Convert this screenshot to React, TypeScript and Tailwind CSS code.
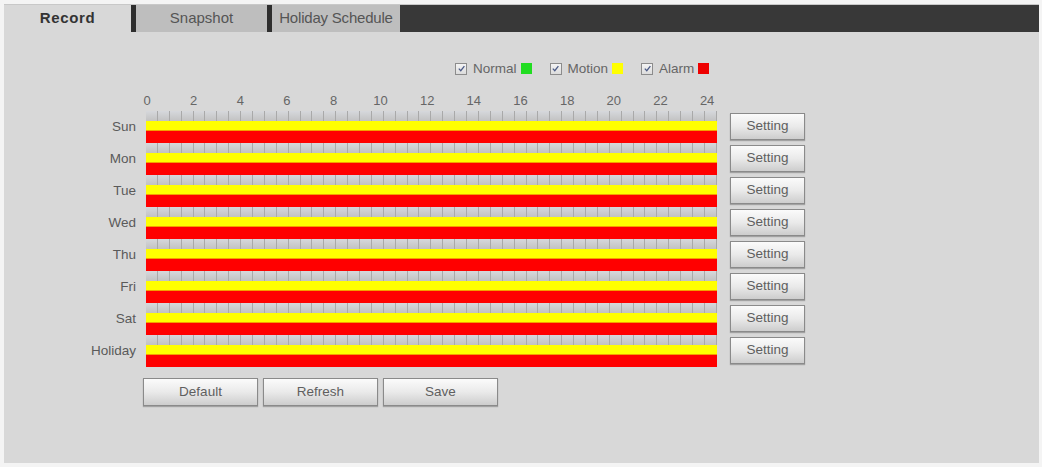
import React from "react";

const DAYS = ["Sun", "Mon", "Tue", "Wed", "Thu", "Fri", "Sat", "Holiday"];
const HOURS = [0, 2, 4, 6, 8, 10, 12, 14, 16, 18, 20, 22, 24];
const TICKS = Array.from({ length: 48 }, (_, i) => i);

function CheckBox() {
  return (
    <span className="inline-flex h-[12px] w-[12px] items-center justify-center border border-[#8c8c8c] bg-gradient-to-b from-[#f4f4f4] to-[#dcdcdc]">
      <svg viewBox="0 0 10 10" className="h-[9px] w-[9px]">
        <path d="M2 5.2 L4.2 7.5 L8.2 2.3" fill="none" stroke="#4b5a86" strokeWidth="1.4" />
      </svg>
    </span>
  );
}

function LegendItem({ label, color }: { label: string; color: string }) {
  return (
    <div className="flex items-center">
      <CheckBox />
      <span className="ml-[6px] text-[13.5px] leading-none text-[#666]">{label}</span>
      <span className={`ml-[4px] h-[11px] w-[11px] ${color}`} />
    </div>
  );
}

function GrayButton({ label, className }: { label: string; className: string }) {
  return (
    <button
      type="button"
      className={`flex items-center justify-center border border-[#8a8a8a] bg-gradient-to-b from-[#fbfbfb] via-[#eaeaea] to-[#cdcdcd] text-[#5f5f5f] shadow-[0_1px_1px_rgba(0,0,0,0.25)] ${className}`}
    >
      {label}
    </button>
  );
}

function DayRow() {
  return (
    <div className="flex h-[32px] w-[571px] flex-col">
      <div className="flex h-[10px] bg-gradient-to-b from-[#d6d8dc] to-[#c2c2c2]">
        {TICKS.map((t) => (
          <span key={t} className="flex-1 border-r border-[#a9a9a9]" />
        ))}
      </div>
      <div className="h-[10px] border-b border-[#f2a100] bg-[#ffff00]" />
      <div className="h-[12px] bg-[#ff0000]" />
    </div>
  );
}

export default function App() {
  return (
    <div className="h-[467px] w-[1042px] bg-[#f4f4f4] pl-[4px] pt-[4px] font-['Liberation_Sans',Arial,sans-serif]">
      <div className="h-[459px] w-[1035px] bg-[#d8d8d8]">
        {/* Tabs */}
        <div className="flex h-[28px] border-t border-[#c8c8c8]">
          <div className="flex w-[127px] items-center justify-center text-[15px] font-bold tracking-[0.6px] text-[#333]">
            Record
          </div>
          <div className="w-[5px] bg-[#2e2e2e]" />
          <div className="flex w-[131px] items-center justify-center bg-[#bebebe] text-[15px] text-[#555]">
            Snapshot
          </div>
          <div className="w-[5px] bg-[#2e2e2e]" />
          <div className="flex w-[128px] items-center justify-center bg-[#bebebe] text-[15px] tracking-[-0.2px] text-[#555]">
            Holiday Schedule
          </div>
          <div className="flex-1 bg-[#383838]" />
        </div>

        {/* Legend */}
        <div className="mt-[30px] flex h-[13px] items-center gap-[18px] pl-[451px]">
          <LegendItem label="Normal" color="bg-[#22dd22]" />
          <LegendItem label="Motion" color="bg-[#ffff00]" />
          <LegendItem label="Alarm" color="bg-[#ee0000]" />
        </div>

        {/* Hours */}
        <div className="mt-[19px] flex w-[710px] justify-between pl-[136px] text-[13px] leading-[13px] text-[#666]">
          {HOURS.map((h) => (
            <span key={h} className="w-[14px] text-center">
              {h}
            </span>
          ))}
        </div>

        {/* Schedule grid */}
        <div className="mt-[4px] flex">
          <div className="flex w-[132px] flex-col">
            {DAYS.map((d) => (
              <div key={d} className="flex h-[32px] items-center justify-end text-[13.5px] text-[#5a5a5a]">
                {d}
              </div>
            ))}
          </div>
          <div className="ml-[10px] flex flex-col">
            {DAYS.map((d) => (
              <DayRow key={d} />
            ))}
          </div>
          <div className="ml-[13px] flex flex-col">
            {DAYS.map((d) => (
              <div key={d} className="flex h-[32px] items-start pt-[2px]">
                <GrayButton label="Setting" className="h-[27px] w-[75px] text-[13.5px]" />
              </div>
            ))}
          </div>
        </div>

        {/* Bottom buttons */}
        <div className="mt-[11px] flex gap-[5px] pl-[139px]">
          <GrayButton label="Default" className="h-[28px] w-[115px] text-[13.5px]" />
          <GrayButton label="Refresh" className="h-[28px] w-[115px] text-[13.5px]" />
          <GrayButton label="Save" className="h-[28px] w-[115px] text-[13.5px]" />
        </div>
      </div>
    </div>
  );
}
